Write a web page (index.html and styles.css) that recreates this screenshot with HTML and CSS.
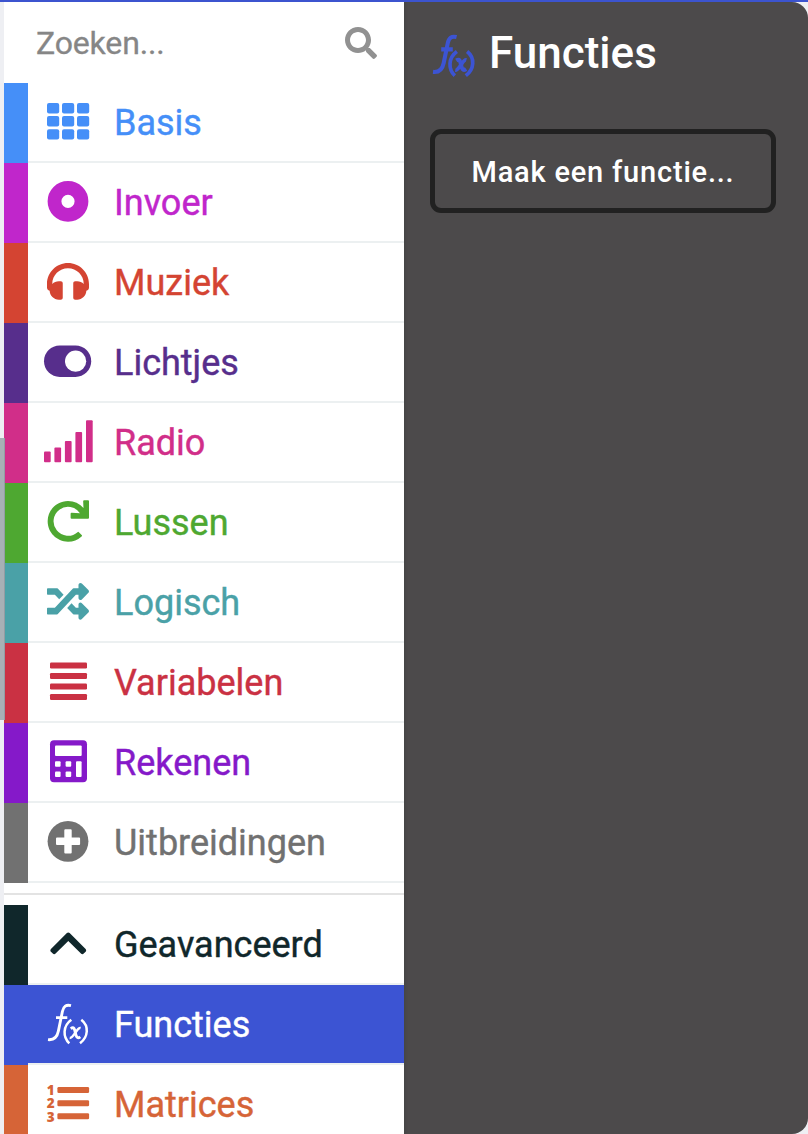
FILE: index.html
```
<!DOCTYPE html>
<html lang="nl">
<head>
<meta charset="utf-8">
<title>Functies</title>
<link rel="stylesheet" href="styles.css">
</head>
<body>
<svg class="defs" width="0" height="0"><defs>
<g id="fx" fill="none" stroke="currentColor" stroke-linecap="butt">
<path class="fx-bold" d="M71 20.6C66 19.4 63.5 21.2 62.4 26.5L58.4 46C57.2 52 53.5 55.2 48 54.6M56 32.6H67.3"/>
<path class="fx-thin" d="M71.300 34.700C62.700 41 62.700 52 69.300 58.300M81.300 34.700C89.300 41 88.300 52 80 58.300"/>
<path class="fx-bold" d="M70.700 43.600C74 41.500 74.600 44 75.300 47.500S77 54.200 80.300 51.800"/>
<path class="fx-thin" d="M80.600 43C77 42 73.500 53.500 69.700 53"/>
</g></defs></svg>
<div class="app">
<aside class="toolbox">
<div class="scrollbar"></div>
<div class="search"><span>Zoeken...</span><svg class="lens" viewBox="0 0 512 512" fill="currentColor"><path d="M505 442.700L405.300 343c-4.500-4.500-10.600-7-17-7H372c27.600-35.300 44-79.700 44-128C416 93.100 322.900 0 208 0S0 93.100 0 208s93.100 208 208 208c48.300 0 92.700-16.400 128-44v16.300c0 6.400 2.500 12.500 7 17l99.700 99.700c9.400 9.400 24.600 9.400 33.900 0l28.300-28.300c9.400-9.400 9.400-24.600.1-34zM208 336c-70.700 0-128-57.200-128-128 0-70.700 57.200-128 128-128 70.700 0 128 57.200 128 128 0 70.700-57.200 128-128 128z"/></svg></div>
<div class="row basis"><svg class="icon" viewBox="38 0 60 80"><g fill="currentColor"><rect x="47" y="20" width="12.200" height="10.400" rx="2"/><rect x="62" y="20" width="12.200" height="10.400" rx="2"/><rect x="77" y="20" width="12.200" height="10.400" rx="2"/><rect x="47" y="33.100" width="12.200" height="10.400" rx="2"/><rect x="62" y="33.100" width="12.200" height="10.400" rx="2"/><rect x="77" y="33.100" width="12.200" height="10.400" rx="2"/><rect x="47" y="46.200" width="12.200" height="10.400" rx="2"/><rect x="62" y="46.200" width="12.200" height="10.400" rx="2"/><rect x="77" y="46.200" width="12.200" height="10.400" rx="2"/></g></svg><span>Basis</span></div>
<div class="row invoer"><svg class="icon" viewBox="38 0 60 80"><circle cx="68" cy="38.300" r="13.500" fill="none" stroke="currentColor" stroke-width="13.800"/></svg><span>Invoer</span></div>
<div class="row muziek"><svg class="icon" viewBox="38 0 60 80"><path fill="currentColor" transform="translate(47 17.300) scale(.082)" d="M256 32C114.520 32 0 146.497 0 288v48a32 32 0 0 0 17.689 28.622l14.383 7.191C34.083 431.903 83.421 480 144 480h24c13.255 0 24-10.745 24-24V280c0-13.255-10.745-24-24-24h-24c-31.342 0-59.671 12.879-80 33.627V288c0-105.869 86.131-192 192-192s192 86.131 192 192v1.627C427.671 268.879 399.342 256 368 256h-24c-13.255 0-24 10.745-24 24v176c0 13.255 10.745 24 24 24h24c60.579 0 109.928-48.098 111.928-108.187l14.382-7.191A32 32 0 0 0 512 336v-48c0-141.479-114.496-256-256-256z"/></svg><span>Muziek</span></div>
<div class="row lichtjes"><svg class="icon" viewBox="38 0 60 80"><rect x="44" y="22.400" width="47.200" height="31.500" rx="15.750" fill="currentColor"/><circle cx="75.600" cy="38.200" r="10.600" fill="#fff"/></svg><span>Lichtjes</span></div>
<div class="row radio"><svg class="icon" viewBox="38 0 60 80"><g fill="currentColor"><rect x="44" y="48.600" width="6.700" height="10.700" rx="1"/><rect x="54.400" y="44.600" width="6.700" height="14.700" rx="1"/><rect x="64.900" y="38" width="6.700" height="21.300" rx="1"/><rect x="75.400" y="29" width="6.700" height="30.300" rx="1"/><rect x="86" y="17.200" width="6.700" height="42.100" rx="1"/></g></svg><span>Radio</span></div>
<div class="row lussen"><svg class="icon" viewBox="38 0 60 80"><path fill="currentColor" transform="translate(47 17.300) scale(.082)" d="M500.330 0h-47.410a12 12 0 0 0-12 12.570l4 82.760A247.420 247.420 0 0 0 256 8C119.340 8 7.900 119.530 8 256.190 8.100 393.070 119.100 504 256 504a247.100 247.100 0 0 0 166.180-63.910 12 12 0 0 0 .48-17.430l-34-34a12 12 0 0 0-16.380-.55A176 176 0 1 1 402.100 157.800l-101.530-4.870a12 12 0 0 0-12.570 12v47.410a12 12 0 0 0 12 12h200.330a12 12 0 0 0 12-12V12a12 12 0 0 0-12-12z"/></svg><span>Lussen</span></div>
<div class="row logisch"><svg class="icon" viewBox="38 0 60 80"><path fill="currentColor" transform="translate(47 17.300) scale(.082)" d="M504.971 359.029c9.373 9.373 9.373 24.569 0 33.941l-80 79.984c-15.010 15.010-40.971 4.490-40.971-16.971V416h-58.785a12.004 12.004 0 0 1-8.773-3.812l-70.556-75.596 53.333-57.143L352 336h32v-39.981c0-21.438 25.943-31.998 40.971-16.971l80 79.981zM12 176h84l52.781 56.551 53.333-57.143-70.556-75.596A11.999 11.999 0 0 0 122.785 96H12c-6.627 0-12 5.373-12 12v56c0 6.627 5.373 12 12 12zm372 0v39.984c0 21.460 25.961 31.980 40.971 16.971l80-79.984c9.373-9.373 9.373-24.569 0-33.941l-80-79.981C409.943 24.021 384 34.582 384 56.019V96h-58.785a12.004 12.004 0 0 0-8.773 3.812L96 336H12c-6.627 0-12 5.373-12 12v56c0 6.627 5.373 12 12 12h110.785c3.326 0 6.503-1.381 8.773-3.812L352 176h32z"/></svg><span>Logisch</span></div>
<div class="row variabelen"><svg class="icon" viewBox="38 0 60 80"><g fill="currentColor"><rect x="50" y="19.500" width="37" height="6" rx="1.200"/><rect x="50" y="30" width="37" height="6" rx="1.200"/><rect x="50" y="40.500" width="37" height="6" rx="1.200"/><rect x="50" y="51" width="37" height="6" rx="1.200"/></g></svg><span>Variabelen</span></div>
<div class="row rekenen"><svg class="icon" viewBox="38 0 60 80"><rect x="50" y="17.300" width="37" height="42" rx="4" fill="currentColor"/><g fill="#fff"><rect x="55" y="22.600" width="26.700" height="10.500" rx="1"/><rect x="55" y="38.200" width="5.600" height="5.600" rx="1"/><rect x="65.600" y="38.200" width="5.600" height="5.600" rx="1"/><rect x="55" y="48.500" width="5.600" height="5.600" rx="1"/><rect x="65.600" y="48.500" width="5.600" height="5.600" rx="1"/><rect x="76" y="38.200" width="5.600" height="15.900" rx="1"/></g></svg><span>Rekenen</span></div>
<div class="row uitbreidingen"><svg class="icon" viewBox="38 0 60 80"><circle cx="68" cy="38.300" r="20.400" fill="currentColor"/><path fill="#fff" d="M65.300 26.300h5.400q1 0 1 1v7.300h7.400q1 0 1 1v5.400q0 1-1 1h-7.400v7.400q0 1-1 1h-5.400q-1 0-1-1v-7.400h-7.300q-1 0-1-1v-5.400q0-1 1-1h7.300v-7.300q0-1 1-1z"/></svg><span>Uitbreidingen</span></div>
<div class="divider"></div>
<div class="row geavanceerd"><svg class="icon" viewBox="38 0 60 80"><path fill="currentColor" transform="translate(49.900 17.300) scale(.082)" d="M240.971 130.524l194.343 194.343c9.373 9.373 9.373 24.569 0 33.941l-22.667 22.667c-9.357 9.357-24.522 9.375-33.901.04L224 227.495 69.255 381.516c-9.379 9.335-24.544 9.317-33.901-.04l-22.667-22.667c-9.373-9.373-9.373-24.569 0-33.941L207.030 130.525c9.372-9.373 24.568-9.373 33.941-.001z"/></svg><span>Geavanceerd</span></div>
<div class="row functies"><svg class="icon" viewBox="38 0 60 80"><use href="#fx"/></svg><span>Functies</span></div>
<div class="row matrices"><svg class="icon" viewBox="38 0 60 80"><g fill="currentColor"><rect x="57.400" y="22" width="31.700" height="6" rx="1.300"/><rect x="57.400" y="35.200" width="31.700" height="6" rx="1.300"/><rect x="57.400" y="48.300" width="31.700" height="6" rx="1.300"/><g class="digits"><text x="46.700" y="30">1</text><text x="46.700" y="43.300">2</text><text x="46.700" y="56.500">3</text></g></g></svg><span>Matrices</span></div>
</aside>
<main class="flyout">
<header><svg class="heading-icon" viewBox="47 18.600 42 42"><use href="#fx"/></svg><h1>Functies</h1></header>
<button>Maak een functie...</button>
</main>
</div>
</body>
</html>
```
FILE: styles.css
```
* { box-sizing: border-box; }
body { margin: 0; background: #eeeff3; font-family: Roboto, "Liberation Sans", sans-serif; }
.defs { position: absolute; }
.fx-bold { stroke-width: var(--bold, 2.9px); }
.fx-thin { stroke-width: var(--thin, 2.5px); }
.app { display: flex; height: 1134px; border-top: 2px solid #3c54cf; overflow: hidden; }
.toolbox { position: relative; width: 404px; flex: none; padding-left: 4px; background: linear-gradient(90deg, #eeeff3 4px, #fff 4px); }
.scrollbar { position: absolute; z-index: 1; left: 0; top: 436px; width: 5px; height: 282px; background: #a7b0b5; border-right: 1px solid #929ca3; }
.search { height: 81px; padding: 0 27px 0 32px; display: flex; align-items: center; justify-content: space-between; font-size: 32px; color: #868686; -webkit-text-stroke: .3px currentColor; }
.search span { letter-spacing: -.15px; padding-top: 1px; }
.lens { width: 32px; height: 32px; color: #919191; margin-top: 1px; }
.row { --tone: #458ff8; height: 80px; display: flex; border-left: 24px solid var(--tone); color: var(--tone); font-size: 36px; line-height: 81px; background: linear-gradient(#ecf0f1, #ecf0f1) 0 78px / 100% 2px no-repeat; white-space: nowrap; -webkit-text-stroke: .4px currentColor; }
.icon { width: 60px; height: 80px; margin: 0 16px 0 10px; flex: none; -webkit-text-stroke: 0; }
.digits { font: 800 13.500px/1 "Open Sans", Roboto, sans-serif; -webkit-text-stroke: .5px currentColor; }
.invoer { --tone: #c026cb; }
.muziek { --tone: #d44432; }
.lichtjes { --tone: #572e8c; }
.radio { --tone: #d12e89; }
.lussen { --tone: #4ea831; }
.logisch { --tone: #4aa1a7; }
.variabelen { --tone: #ca3143; }
.rekenen { --tone: #8519c9; }
.uitbreidingen { --tone: #717171; }
.geavanceerd { --tone: #10272b; }
.functies { --tone: #3c54d3; color: #fff; background-color: #3c54d3; }
.matrices { --tone: #d66437; }
.divider { height: 22px; background: linear-gradient(#e3e3e3, #e3e3e3) 0 10px / 100% 2px no-repeat; }
.flyout { flex: 1; background: #4c4a4b; border-radius: 0 16px 16px 0; padding: 27px 0 0 26px; color: #fff; box-shadow: inset 4px 0 3px -3px #434445; }
.flyout header { display: flex; height: 100px; align-items: flex-start; }
.heading-icon { --bold: 4px; --thin: 3.600px; width: 43px; height: 43px; color: #3c54d3; margin: 6px 14px 0 2px; overflow: visible; }
h1 { margin: 0; font-size: 44px; line-height: 49px; font-weight: 500; }
button { display: block; width: 346px; height: 84px; padding: 1px 0 0; border: 5px solid #212121; border-radius: 11px; background: none; color: #fff; font: 500 29px Roboto, sans-serif; letter-spacing: .8px; }
```
